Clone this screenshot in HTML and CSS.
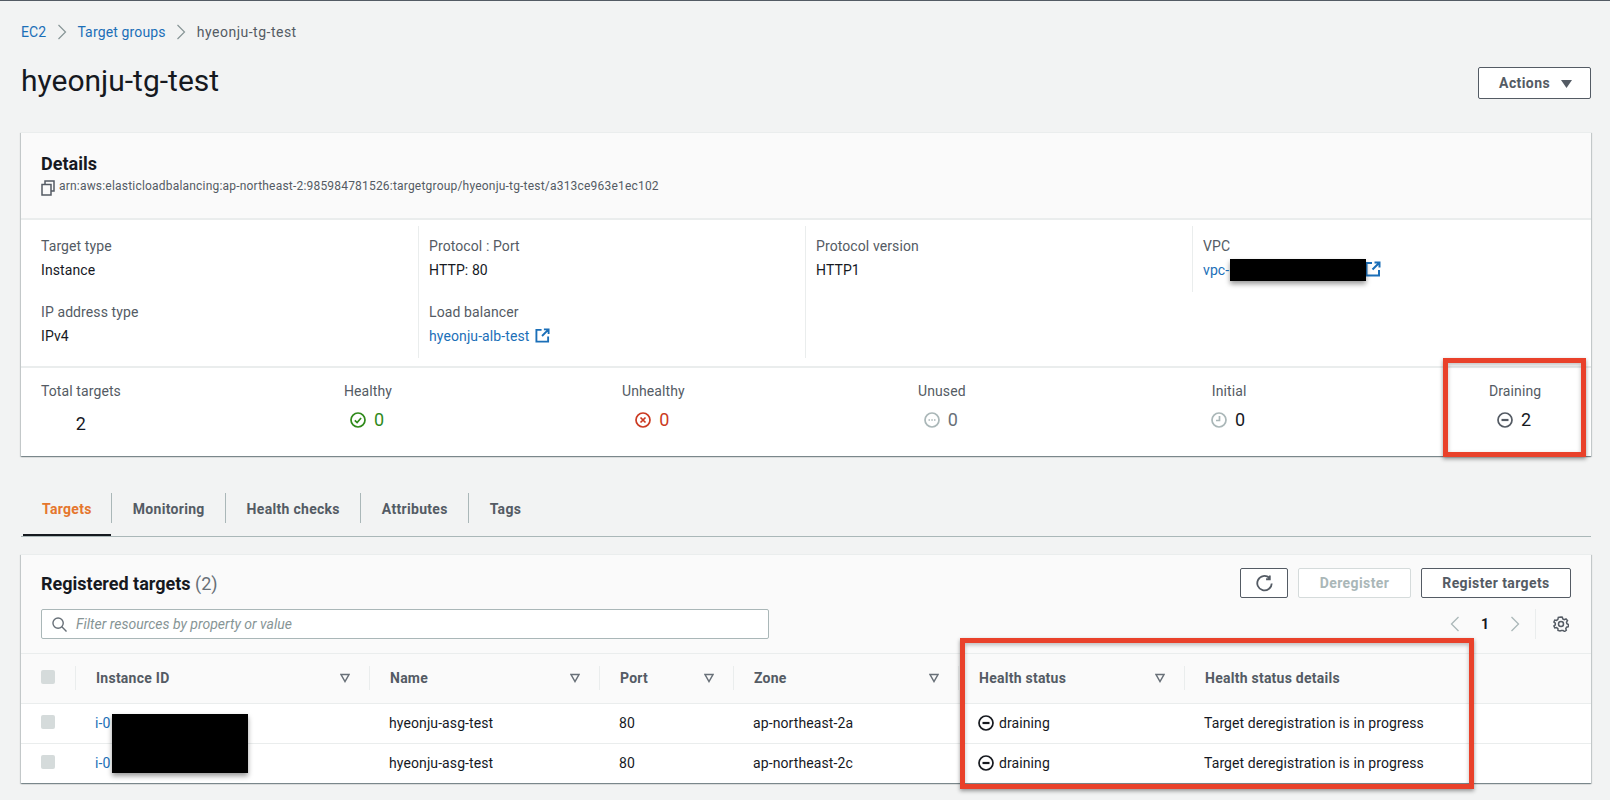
FILE: index.html
```html
<!DOCTYPE html>
<html lang="en">
<head>
<meta charset="utf-8">
<title>hyeonju-tg-test</title>
<link rel="stylesheet" href="styles.css">
</head>
<body>
<main class="page">
  <nav class="crumbs">
    <a class="link">EC2</a>
    <svg class="crumb-sep" viewBox="0 0 10 16"><path d="M1.5 1l7 7-7 7"/></svg>
    <a class="link">Target groups</a>
    <svg class="crumb-sep" viewBox="0 0 10 16"><path d="M1.5 1l7 7-7 7"/></svg>
    <span class="crumb-current">hyeonju-tg-test</span>
  </nav>
  <header class="head">
    <h1>hyeonju-tg-test</h1>
    <button class="btn btn-actions">Actions <svg class="caret" viewBox="0 0 12 8"><path d="M0.5 0h11L6 8z"/></svg></button>
  </header>

  <section class="card details">
    <div class="details-head">
      <h2>Details</h2>
      <div class="arn">
        <svg class="copy" viewBox="0 0 14 16"><path d="M4 4V1h9v10h-3M1 4.500h9V15H1z"/></svg>
        <span>arn:aws:elasticloadbalancing:ap-northeast-2:985984781526:targetgroup/hyeonju-tg-test/a313ce963e1ec102</span>
      </div>
    </div>
    <div class="props">
      <div class="prop-col">
        <div class="prop"><div class="label">Target type</div><div>Instance</div></div>
        <div class="prop"><div class="label">IP address type</div><div>IPv4</div></div>
      </div>
      <div class="prop-col">
        <div class="prop"><div class="label">Protocol : Port</div><div>HTTP: 80</div></div>
        <div class="prop"><div class="label">Load balancer</div><div><a class="link">hyeonju-alb-test</a> <svg class="ext" viewBox="0 0 16 16"><path d="M7 2H1.500v12.500H14V9M9.500 1.500H14.500V6.500M14.500 1.500L7.500 8.500"/></svg></div></div>
      </div>
      <div class="prop-col">
        <div class="prop"><div class="label">Protocol version</div><div>HTTP1</div></div>
      </div>
      <div class="prop-col prop-col-short">
        <div class="prop"><div class="label">VPC</div><div class="vpc"><a class="link">vpc-</a><span class="redact redact-vpc"></span><svg class="ext ext-vpc" viewBox="0 0 16 16"><path d="M7 2H1.500v12.500H14V9M9.500 1.500H14.500V6.500M14.500 1.500L7.500 8.500"/></svg></div></div>
      </div>
    </div>
    <div class="stats">
      <div class="stat"><div class="label">Total targets</div><div class="value value-total">2</div></div>
      <div class="stat"><div class="label">Healthy</div><div class="value green"><svg class="si" viewBox="0 0 16 16"><circle cx="8" cy="8" r="7"/><path d="M4.800 8.300l2.300 2.200 4-4.500"/></svg>0</div></div>
      <div class="stat"><div class="label">Unhealthy</div><div class="value red"><svg class="si" viewBox="0 0 16 16"><circle cx="8" cy="8" r="7"/><path d="M5.500 5.500l5 5M10.500 5.500l-5 5"/></svg>0</div></div>
      <div class="stat"><div class="label">Unused</div><div class="value grey"><svg class="si si-light" viewBox="0 0 16 16"><circle cx="8" cy="8" r="7"/><path class="dots" d="M4.500 8h1.500M7.300 8h1.500M10 8h1.500"/></svg>0</div></div>
      <div class="stat"><div class="label">Initial</div><div class="value"><svg class="si si-light" viewBox="0 0 16 16"><circle cx="8" cy="8" r="7"/><path d="M8.500 4v4.500H5"/></svg>0</div></div>
      <div class="stat"><div class="label">Draining</div><div class="value"><svg class="si si-dark" viewBox="0 0 16 16"><circle cx="8" cy="8" r="7"/><path class="bar" d="M4.500 8h7"/></svg>2</div></div>
    </div>
    <div class="mark mark-stat"></div>
  </section>

  <div class="tabs">
    <a class="tab tab-active">Targets</a>
    <a class="tab">Monitoring</a>
    <a class="tab">Health checks</a>
    <a class="tab">Attributes</a>
    <a class="tab">Tags</a>
  </div>

  <section class="card targets">
    <div class="targets-head">
      <div class="title-row">
        <h2>Registered targets <span class="count">(2)</span></h2>
        <div class="actions">
          <button class="btn btn-icon"><svg class="refresh" viewBox="0 0 16 16"><path d="M12.500 2.600A6.800 6.800 0 1 0 14.800 8M13 .5v3.500H9.500"/></svg></button>
          <button class="btn btn-disabled">Deregister</button>
          <button class="btn btn-register">Register targets</button>
        </div>
      </div>
      <div class="filter-row">
        <div class="filter">
          <svg class="search" viewBox="0 0 16 16"><circle cx="6.500" cy="6.500" r="5.500"/><path d="M10.500 10.500l5 5"/></svg>
          <span class="placeholder">Filter resources by property or value</span>
        </div>
        <div class="pager">
          <svg class="chev" viewBox="0 0 10 16"><path d="M8.500 1l-7 7 7 7"/></svg>
          <span class="page-num">1</span>
          <svg class="chev" viewBox="0 0 10 16"><path d="M1.500 1l7 7-7 7"/></svg>
          <div class="pager-sep">
            <svg class="gear" viewBox="0 0 16 16"><path d="M8 1l1.300.2.500 1.800 1.500.7 1.700-.8 1.500 1.700-1 1.500.4 1.600 1.600.9-.1 2-1.800.6-.8 1.400.5 1.700-1.800 1.200-1.400-1.100-1.700.1L7 15l-2-.5-.1-1.900-1.300-1-1.800.3-.9-1.900 1.400-1.200V7.200L.9 6l.9-1.900 1.800.3L4.900 3.300 5.300 1.400z"/><circle cx="8" cy="8" r="2.500"/></svg>
          </div>
        </div>
      </div>
    </div>
    <table class="grid">
      <colgroup><col class="c1"><col class="c2"><col class="c3"><col class="c4"><col class="c5"><col class="c6"><col></colgroup>
      <thead>
        <tr>
          <th><span class="cb"></span></th>
          <th><div class="th">Instance ID<svg class="sort" viewBox="0 0 10 10"><path d="M1 1.500h8L5 8.500z"/></svg></div></th>
          <th><div class="th">Name<svg class="sort" viewBox="0 0 10 10"><path d="M1 1.500h8L5 8.500z"/></svg></div></th>
          <th><div class="th">Port<svg class="sort" viewBox="0 0 10 10"><path d="M1 1.500h8L5 8.500z"/></svg></div></th>
          <th><div class="th">Zone<svg class="sort" viewBox="0 0 10 10"><path d="M1 1.500h8L5 8.500z"/></svg></div></th>
          <th><div class="th">Health status<svg class="sort" viewBox="0 0 10 10"><path d="M1 1.500h8L5 8.500z"/></svg></div></th>
          <th><div class="th">Health status details</div></th>
        </tr>
      </thead>
      <tbody>
        <tr>
          <td><span class="cb"></span></td>
          <td class="id-cell"><a class="link">i-0</a><span class="redact redact-id"></span></td>
          <td>hyeonju-asg-test</td>
          <td>80</td>
          <td>ap-northeast-2a</td>
          <td><div class="status"><svg class="si si-black" viewBox="0 0 16 16"><circle cx="8" cy="8" r="7"/><path class="bar" d="M4.500 8h7"/></svg>draining</div></td>
          <td>Target deregistration is in progress</td>
        </tr>
        <tr>
          <td><span class="cb"></span></td>
          <td><a class="link">i-0</a></td>
          <td>hyeonju-asg-test</td>
          <td>80</td>
          <td>ap-northeast-2c</td>
          <td><div class="status"><svg class="si si-black" viewBox="0 0 16 16"><circle cx="8" cy="8" r="7"/><path class="bar" d="M4.500 8h7"/></svg>draining</div></td>
          <td>Target deregistration is in progress</td>
        </tr>
      </tbody>
    </table>
    <div class="mark mark-table"></div>
  </section>
</main>
</body>
</html>
```

FILE: styles.css
```css
* { box-sizing: border-box; }
html, body { margin: 0; height: 800px; overflow: hidden; }
body {
  background: #f2f3f3;
  border-top: 1px solid #545b64;
  color: #16191f;
  font-family: Roboto, "Liberation Sans", sans-serif;
  font-size: 14px;
  line-height: 20px;
  letter-spacing: .1px;
}
.page { padding: 0 19px 0 21px; }
.link { color: #1b6fb8; }
.crumbs { display: flex; align-items: center; height: 22px; margin-top: 20px; letter-spacing: .15px; }
.crumb-sep { width: 10px; height: 16px; margin: 0 10.500px; fill: none; stroke: #879596; stroke-width: 1.200; }
.crumb-current { color: #545b64; letter-spacing: .5px; }
.head { display: flex; justify-content: space-between; align-items: center; height: 36px; margin-top: 20px; }
h1 { margin: 0; font-size: 30px; font-weight: 400; line-height: 36px; letter-spacing: 0; }
.btn {
  font: 700 14px/20px Roboto, "Liberation Sans", sans-serif;
  letter-spacing: .4px;
  color: #545b64;
  background: #fff;
  border: 1px solid #545b64;
  border-radius: 2px;
  padding: 0;
  height: 30px;
}
.btn-actions { width: 113px; height: 32px; margin-top: 4px; padding-left: 3px; }
.caret { width: 13px; height: 8px; margin-left: 6px; fill: #545b64; }
.card { position: relative; background: #fff; box-shadow: 0 1px 1px rgba(0,28,36,.3), 1px 1px 1px rgba(0,28,36,.15), -1px 1px 1px rgba(0,28,36,.15); }
.details { margin-top: 33px; height: 324px; }
.details-head { height: 88px; background: #fafafa; border-top: 1px solid #eaeded; border-bottom: 2px solid #eaeded; padding: 20px 20px 0; }
h2 { margin: 0; font-size: 18px; font-weight: 700; line-height: 22px; letter-spacing: 0; }
.arn { display: flex; align-items: center; font-size: 12px; letter-spacing: .2px; line-height: 14px; color: #545b64; margin-top: 1px; }
.copy { width: 14px; height: 16px; margin-right: 4px; margin-top: 4px; fill: none; stroke: #545b64; stroke-width: 1.500; }
.props { display: grid; grid-template-columns: 377px 387px 387px 1fr; padding: 6px 20px 0; height: 148px; border-bottom: 2px solid #eaeded; }
.prop-col { height: 132px; padding-left: 10px; border-left: 1px solid #eaeded; padding-top: 8px; }
.prop-col:first-child { padding-left: 0; border-left: 0; }
.prop-col-short { height: 66px; }
.prop { height: 66px; line-height: 24px; }
.label { color: #545b64; }
.ext { width: 15px; height: 15px; vertical-align: -2px; margin-left: 2px; fill: none; stroke: #1b6fb8; stroke-width: 2; }
.vpc { position: relative; }
.redact { position: absolute; background: #000; box-shadow: 0 3px 5px rgba(0,0,0,.4); }
.redact-vpc { left: 27px; top: 1px; width: 136px; height: 22px; }
.ext-vpc { width: 16px; height: 16px; margin-left: 136px; }
.stats { display: grid; grid-template-columns: 303px 278px 296px 293px 278px auto; padding: 13px 0 0 20px; }
.stat { width: max-content; text-align: center; }
.value { display: flex; align-items: center; justify-content: center; font-size: 18px; line-height: 24px; margin-top: 7px; padding-right: 2px; }
.value-total { margin-top: 11px; padding-right: 0; }
.green { color: #2f8a1a; }
.red { color: #cb3a22; }
.grey { color: #687078; }
.si { width: 16px; height: 16px; margin-right: 8px; fill: none; stroke: currentColor; stroke-width: 1.700; }
.si-light { stroke: #aab7b8; }
.si-dark { stroke: #545b64; }
.si-black { stroke: #16191f; width: 16px; margin-right: 5px; }
.si .bar { stroke-width: 2.200; }
.si .dots { stroke-width: 1.500; }
.mark { position: absolute; border: 5px solid #e9412a; box-shadow: 0 2px 4px rgba(0,0,0,.4), inset 0 2px 4px rgba(0,0,0,.25); pointer-events: none; }
.mark-stat { left: 1422px; top: 226px; width: 143px; height: 99px; }
.mark-table { left: 939px; top: 84px; width: 514px; height: 151px; }
.tabs { display: flex; height: 45px; margin-top: 36px; border-bottom: 1px solid #aab7b8; padding-left: 2px; }
.tab { position: relative; display: block; height: 44px; padding: 7px 20px 0 22px; font-weight: 700; letter-spacing: .3px; color: #545b64; }
.tab + .tab::before { content: ""; position: absolute; left: 0; top: 1px; width: 1px; height: 30px; background: #aab7b8; }
.tab-active { color: #e5762d; border-bottom: 2px solid #16191f; padding: 7px 19px 0 19px; }
.targets { margin-top: 17px; height: 229px; }
.targets-head { height: 100px; background: #fafafa; border-top: 1px solid #eaeded; border-bottom: 1px solid #eaeded; padding: 14px 20px 0; }
.title-row { display: flex; justify-content: space-between; align-items: center; height: 30px; }
.count { color: #687078; font-weight: 400; }
.actions { display: flex; gap: 10px; margin-top: -2px; }
.btn-icon { width: 48px; display: flex; align-items: center; justify-content: center; }
.refresh { width: 17px; height: 17px; fill: none; stroke: #545b64; stroke-width: 1.700; }
.btn-disabled { width: 113px; color: #aab7b8; border-color: #d5dbdb; background: #fff; }
.btn-register { width: 150px; }
.filter-row { display: flex; justify-content: space-between; align-items: center; margin-top: 10px; }
.filter { display: flex; align-items: center; width: 728px; height: 30px; background: #fff; border: 1px solid #aab7b8; border-radius: 2px; padding-left: 10px; }
.search { width: 15px; height: 15px; margin-right: 9px; fill: none; stroke: #687078; stroke-width: 1.500; }
.placeholder { color: #879596; font-style: italic; letter-spacing: 0; }
.pager { display: flex; align-items: center; height: 30px; }
.chev { width: 10px; height: 16px; fill: none; stroke: #aab7b8; stroke-width: 1.300; }
.page-num { width: 50px; text-align: center; font-weight: 700; }
.pager-sep { height: 30px; margin-left: 15px; padding-left: 17px; padding-right: 2px; border-left: 1px solid #eaeded; display: flex; align-items: center; }
.gear { width: 16px; height: 16px; fill: none; stroke: #545b64; stroke-width: 1.500; }
.grid { width: 100%; border-collapse: collapse; table-layout: fixed; background: #fff; }
.c1 { width: 54px; }
.c2 { width: 294px; }
.c3 { width: 230px; }
.c4 { width: 134px; }
.c5 { width: 225px; }
.c6 { width: 226px; }
.grid thead tr { background: #fafafa; height: 49px; border-bottom: 1px solid #eaeded; }
th { padding: 0; text-align: left; color: #545b64; }
th:first-child, td:first-child { padding-left: 20px; }
.th { display: flex; justify-content: space-between; align-items: center; height: 24px; padding: 0 19px 0 20px; border-left: 1px solid #eaeded; font-weight: 700; letter-spacing: .25px; }
.sort { width: 10px; height: 10px; fill: none; stroke: #687078; stroke-width: 1.500; }
td { padding: 0 0 0 20px; height: 40px; font-size: 14px; }
tbody tr { border-bottom: 1px solid #eaeded; }
tbody tr:last-child { border-bottom: 0; }
.cb { display: block; width: 14px; height: 14px; margin-top: -2px; background: #d5dbdb; border-radius: 2px; }
.id-cell { position: relative; }
.redact-id { left: 37px; top: 10px; width: 136px; height: 59px; }
.status { display: flex; align-items: center; }
```
